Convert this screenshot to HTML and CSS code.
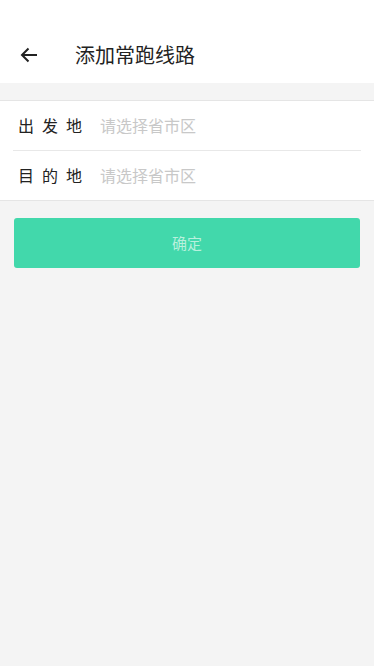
FILE: index.html
```html
<!DOCTYPE html>
<html lang="zh">
<head>
<meta charset="utf-8">
<link rel="stylesheet" href="styles.css">
</head>
<body>
<header class="topbar">
  <span class="back">
    <svg width="20" height="20" viewBox="0 0 20 20"><path d="M18 10H3M9.5 3.5L3 10l6.5 6.5" fill="none" stroke="#222" stroke-width="2"/></svg>
  </span>
  <h1 class="title">添加常跑线路</h1>
</header>
<div class="gap"></div>
<section class="form">
  <div class="row">
    <span class="label">出发地</span>
    <span class="placeholder">请选择省市区</span>
  </div>
  <div class="row">
    <span class="label">目的地</span>
    <span class="placeholder">请选择省市区</span>
  </div>
</section>
<div class="actions">
  <button class="confirm">确定</button>
</div>
</body>
</html>
```
FILE: styles.css
```css
html, body {
  margin: 0;
  padding: 0;
  background: #f4f4f4;
  font-family: "Noto Sans CJK SC", "Noto Sans", sans-serif;
  height: 100%;
}
.topbar {
  height: 83px;
  background: #fff;
  display: flex;
  align-items: center;
  padding-top: 26px;
  box-sizing: border-box;
}
.back {
  width: 20px;
  height: 20px;
  margin-left: 19px;
  display: flex;
}
.title {
  margin: 0 0 0 36px;
  font-size: 20px;
  font-weight: 400;
  color: #222;
  line-height: 1;
}
.gap {
  height: 17px;
}
.form {
  background: #fff;
  border-top: 1px solid #e5e5e5;
  border-bottom: 1px solid #e5e5e5;
  padding: 0 13px;
}
.row {
  height: 49px;
  display: flex;
  align-items: center;
  padding-bottom: 2px;
  box-sizing: border-box;
}
.row + .row {
  height: 50px;
  border-top: 1px solid #e8e8e8;
}
.label {
  box-sizing: border-box;
  width: 87px;
  padding-left: 5px;
  font-size: 16px;
  letter-spacing: 8px;
  color: #222;
}
.placeholder {
  font-size: 16px;
  color: #c8c8c8;
}
.actions {
  padding: 17px 14px;
}
.confirm {
  width: 100%;
  height: 50px;
  border: none;
  border-radius: 3px;
  background: #42d8ab;
  color: #b8f0dd;
  font-family: inherit;
  font-size: 15px;
  padding: 0 0 2px;
}
```
